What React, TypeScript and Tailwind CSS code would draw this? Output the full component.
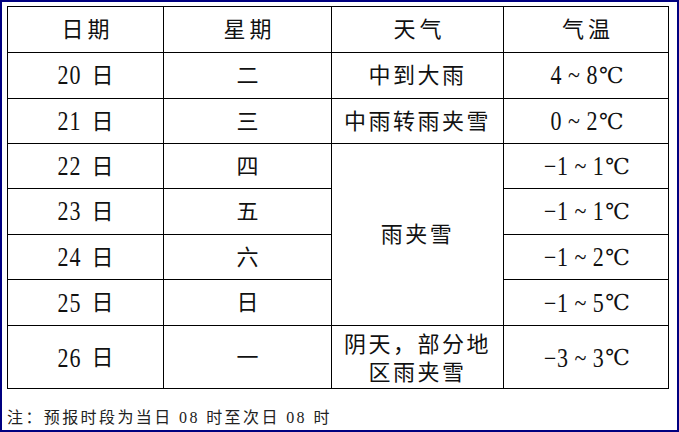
const rows = [
  { date: '20', week: '二', weather: '中到大雨', temp: '4 ~ 8' },
  { date: '21', week: '三', weather: '中雨转雨夹雪', temp: '0 ~ 2' },
  { date: '22', week: '四', weather: '雨夹雪', span: true, temp: '−1 ~ 1' },
  { date: '23', week: '五', temp: '−1 ~ 1' },
  { date: '24', week: '六', temp: '−1 ~ 2' },
  { date: '25', week: '日', temp: '−1 ~ 5' },
  { date: '26', week: '一', weather: 'multi', temp: '−3 ~ 3' },
];

const cell = 'bg-white flex items-center justify-center';

const App = () => {
  return (
    <div className="w-[679px] h-[432px] border-2 border-[#000080] bg-white pl-[5px] pt-[4px] text-[#111] font-['Liberation_Serif','DejaVu_Serif','Noto_Sans_CJK_SC',serif]">
      {/* forecast table */}
      <div className="grid w-fit bg-black p-px gap-px grid-cols-[155px_167px_171px_164px] grid-rows-[45px_45px_44px_44px_45px_44px_45px_62px] text-[22px]">
        <div className={`${cell} tracking-[4px] pl-[4px]`}>日期</div>
        <div className={`${cell} tracking-[4px] pl-[4px]`}>星期</div>
        <div className={`${cell} tracking-[4px] pl-[4px]`}>天气</div>
        <div className={`${cell} tracking-[4px] pl-[4px]`}>气温</div>

        {rows.map((r) => (
          <>
            <div key={r.date + 'd'} className={cell}>
              <span className="inline-block scale-y-[1.2] tracking-[1px]">{r.date}</span>
              <span className="ml-[10px]">日</span>
            </div>
            <div key={r.date + 'w'} className={cell}>{r.week}</div>
            {r.weather === 'multi' ? (
              <div key={r.date + 'x'} className={`${cell} flex-col leading-[28px] tracking-[2.5px] pt-[4px]`}>
                <span>阴天，部分地</span>
                <span>区雨夹雪</span>
              </div>
            ) : r.weather ? (
              <div key={r.date + 'x'} className={`${cell} tracking-[2.5px] ${r.span ? 'row-span-4' : ''}`}>
                {r.weather}
              </div>
            ) : null}
            <div key={r.date + 't'} className={`${cell} pl-[2px]`}>
              <span className="inline-block scale-y-[1.2] tracking-[0.5px]">{r.temp}</span>
              <span className="ml-[1px]">℃</span>
            </div>
          </>
        ))}
      </div>

      {/* note */}
      <p className="mt-[19px] text-[16px] leading-[20px] tracking-[2.4px] text-[#222]">
        注：预报时段为当日 08 时至次日 08 时
      </p>
    </div>
  );
};

export default App;
